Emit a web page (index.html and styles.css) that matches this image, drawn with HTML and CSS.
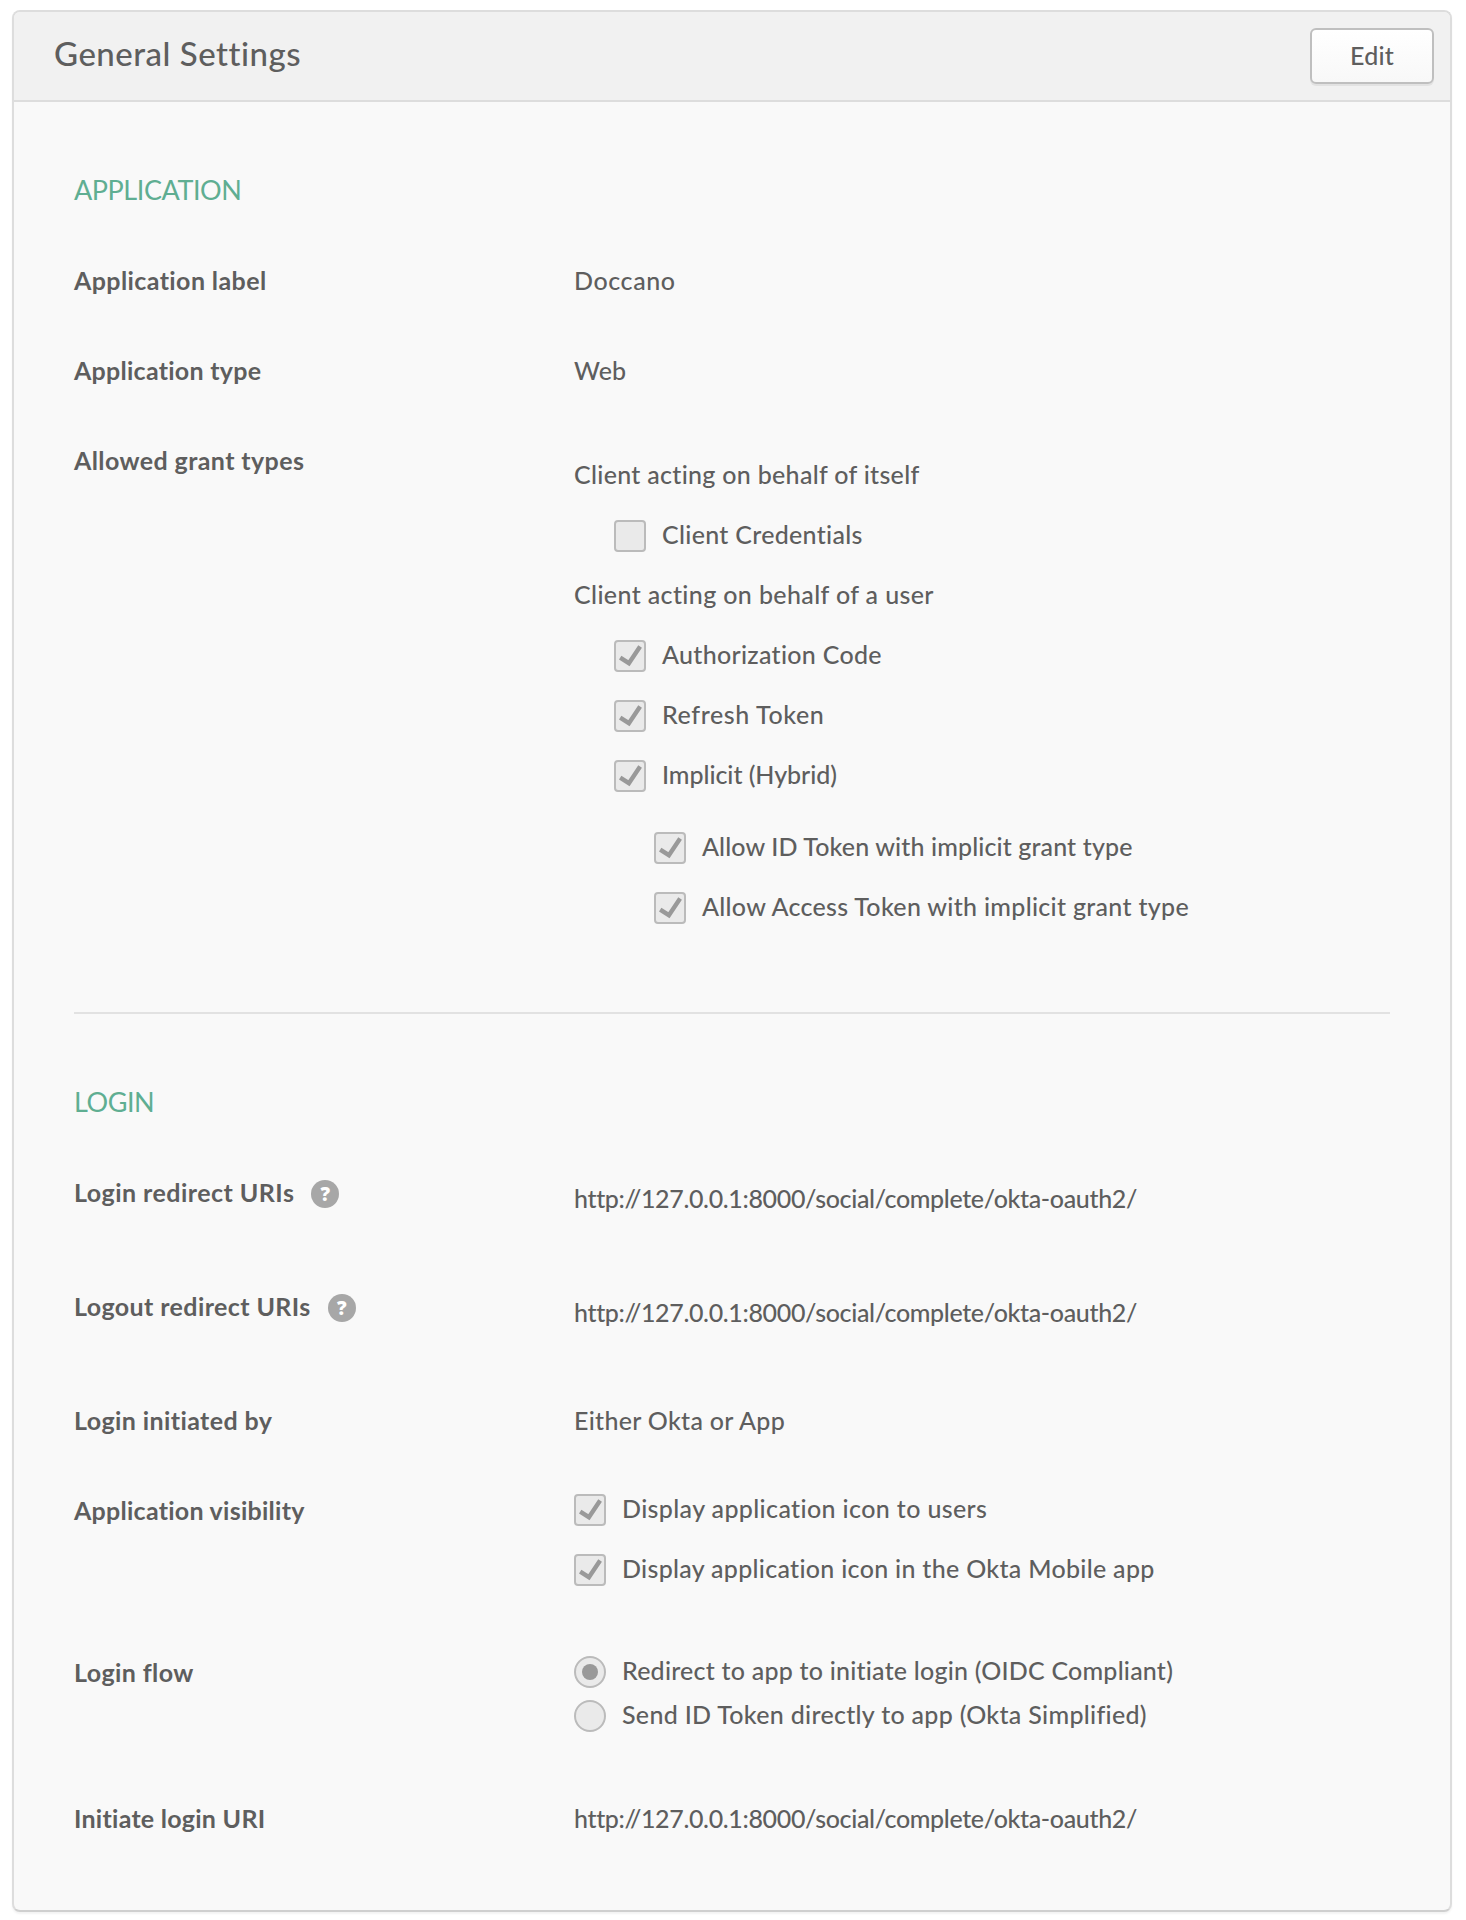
FILE: index.html
```html
<!DOCTYPE html>
<html lang="en">
<head>
<meta charset="utf-8">
<title>General Settings</title>
<link rel="stylesheet" href="styles.css">
</head>
<body>
<svg class="defs" aria-hidden="true">
  <symbol id="check" viewBox="0 0 28 28"><path d="M4.2 15.6 L12.9 21.2 L24.1 4.6" fill="none" stroke="#999" stroke-width="4.4"/></symbol>
</svg>
<main class="card">
  <header class="card-header">
    <h1 class="card-title">General Settings</h1>
    <button class="edit" type="button">Edit</button>
  </header>
  <div class="card-body">
    <section class="section">
      <h2 class="section-title">APPLICATION</h2>
      <div class="row"><div class="label">Application label</div><div class="value looser">Doccano</div></div>
      <div class="row"><div class="label snug">Application type</div><div class="value tighter">Web</div></div>
      <div class="row">
        <div class="label">Allowed grant types</div>
        <div class="value grants">
          <p class="line">Client acting on behalf of itself</p>
          <div class="option indent"><span class="box"></span><span>Client Credentials</span></div>
          <p class="line wide">Client acting on behalf of a user</p>
          <div class="option indent"><span class="box"><svg><use href="#check"/></svg></span><span>Authorization Code</span></div>
          <div class="option indent"><span class="box"><svg><use href="#check"/></svg></span><span class="looser">Refresh Token</span></div>
          <div class="option indent"><span class="box"><svg><use href="#check"/></svg></span><span class="tightest">Implicit (Hybrid)</span></div>
          <div class="option indent-more nested-first"><span class="box"><svg><use href="#check"/></svg></span><span class="tighter">Allow ID Token with implicit grant type</span></div>
          <div class="option indent-more"><span class="box"><svg><use href="#check"/></svg></span><span>Allow Access Token with implicit grant type</span></div>
        </div>
      </div>
    </section>
    <section class="section login">
      <h2 class="section-title">LOGIN</h2>
      <div class="row uri-row"><div class="label roomy">Login redirect URIs<span class="help">?</span></div><div class="value url">http://127.0.0.1:8000/social/complete/okta-oauth2/</div></div>
      <div class="row uri-row"><div class="label">Logout redirect URIs<span class="help">?</span></div><div class="value url">http://127.0.0.1:8000/social/complete/okta-oauth2/</div></div>
      <div class="row initiated"><div class="label">Login initiated by</div><div class="value">Either Okta or App</div></div>
      <div class="row visibility">
        <div class="label snug">Application visibility</div>
        <div class="value stack">
          <div class="option"><span class="box"><svg><use href="#check"/></svg></span><span class="wide">Display application icon to users</span></div>
          <div class="option"><span class="box"><svg><use href="#check"/></svg></span><span>Display application icon in the Okta Mobile app</span></div>
        </div>
      </div>
      <div class="row flow">
        <div class="label">Login flow</div>
        <div class="value radios">
          <div class="option"><span class="box radio selected"></span><span class="narrow">Redirect to app to initiate login (OIDC Compliant)</span></div>
          <div class="option"><span class="box radio"></span><span>Send ID Token directly to app (Okta Simplified)</span></div>
        </div>
      </div>
      <div class="row initiate"><div class="label snug">Initiate login URI</div><div class="value url">http://127.0.0.1:8000/social/complete/okta-oauth2/</div></div>
    </section>
  </div>
</main>
</body>
</html>
```
FILE: styles.css
```css
* { box-sizing: border-box; }
body {
  margin: 0;
  padding: 10px 14px 8px 12px;
  background: #fff;
  color: #5e5e5e;
  font: 500 25px/30px Lato, "Open Sans", sans-serif;
  letter-spacing: .3px;
  white-space: nowrap;
}
h1, h2, p { margin: 0; }
.defs { display: none; }
.card {
  height: 1902px;
  border: 2px solid #ddd;
  border-bottom-color: #cfcfcf;
  border-radius: 8px;
  background: #f9f9f9;
  box-shadow: 0 2px 2px rgba(0, 0, 0, .05);
}
.card-header {
  display: flex;
  justify-content: space-between;
  align-items: flex-start;
  height: 90px;
  padding: 16px 16px 0 40px;
  background: #f1f1f1;
  border-bottom: 2px solid #ddd;
  border-radius: 6px 6px 0 0;
}
.card-title { padding-top: 5px; font-size: 33px; line-height: 40px; font-weight: 500; letter-spacing: .5px; }
.edit {
  width: 124px;
  height: 56px;
  padding: 0 0 3px;
  border: 2px solid #bfbfbf;
  border-radius: 6px;
  background: linear-gradient(#fff, #f8f8f8);
  box-shadow: 0 2px 0 rgba(0, 0, 0, .06);
  color: inherit;
  font: inherit;
  letter-spacing: .2px;
}
.card-body { padding: 72px 60px 0; }
.section-title { color: #5fae92; font-size: 27px; line-height: 32px; font-weight: 400; letter-spacing: -.45px; }
.login { margin-top: 91px; padding-top: 72px; border-top: 2px solid #e2e2e2; }
.row { display: flex; margin-top: 60px; }
.section-title + .row { margin-top: 59px; }
.label { display: flex; width: 500px; flex: none; font-weight: 700; letter-spacing: .4px; }
.value { flex: 1; }
.url { letter-spacing: -.35px; }
.looser { letter-spacing: .6px; }
.wide { letter-spacing: .37px; }
.narrow { letter-spacing: .22px; }
.tighter { letter-spacing: .12px; }
.tightest { letter-spacing: -.05px; }
.label.snug { letter-spacing: .26px; }
.label.roomy { letter-spacing: .46px; }
.grants { padding-top: 14px; }
.grants, .stack { display: flex; flex-direction: column; gap: 30px; }
.radios { display: flex; flex-direction: column; gap: 14px; }
.option { display: flex; gap: 16px; height: 30px; }
.indent { margin-left: 40px; }
.indent-more { margin-left: 80px; }
.nested-first { margin-top: 12px; }
.box {
  display: flex;
  flex: none;
  align-items: center;
  justify-content: center;
  width: 32px;
  height: 32px;
  margin-top: 1px;
  border: 2px solid #bbb;
  border-radius: 4px;
  background: #eaeaea;
}
.box svg { width: 28px; height: 28px; }
.radio { border-radius: 50%; }
.selected::after { content: ""; width: 16px; height: 16px; border-radius: 50%; background: #999; }
.help {
  width: 28px;
  height: 28px;
  margin: 3px 0 0 17px;
  border-radius: 50%;
  background: #a7a7a7;
  color: #fff;
  font: 800 19px/28px "Open Sans", sans-serif;
  letter-spacing: 0;
  text-align: center;
}
.uri-row .value { padding-top: 6px; }
.uri-row + .row { margin-top: 78px; }
.row.visibility { margin-top: 58px; }
.visibility .label, .flow .label { padding-top: 2px; }
.row.flow { margin-top: 72px; }
.row.initiate { margin-top: 74px; }
```
